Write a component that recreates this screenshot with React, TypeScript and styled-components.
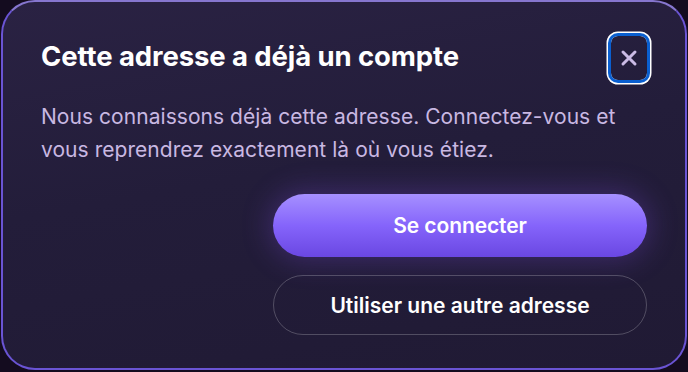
import React from "react";
import styled, { createGlobalStyle } from "styled-components";

const Global = createGlobalStyle`
  html, body { margin: 0; padding: 0; background: #140c1f; }
  body { font-family: Inter, "Noto Sans", sans-serif; -webkit-font-smoothing: antialiased; }
`;

const Page = styled.div`
  width: 688px;
  height: 372px;
  padding: 0 1px 2px 1px;
  box-sizing: border-box;
`;

const Dialog = styled.section`
  box-sizing: border-box;
  width: 686px;
  height: 370px;
  border: 2px solid #6a54d4;
  border-top-color: #8676cf;
  border-radius: 34px;
  background: linear-gradient(170deg, #2a2243 0%, #231d3a 45%, #201a34 100%);
  padding: 30px 38px 0 38px;
  display: flex;
  flex-direction: column;
`;

const Header = styled.div`
  display: flex;
  align-items: center;
  justify-content: space-between;
`;

const Title = styled.h2`
  margin: 0;
  font-family: Inter, sans-serif;
  font-weight: 700;
  font-size: 27.5px;
  line-height: 34px;
  color: #ffffff;
  letter-spacing: -0.1px;
`;

const CloseButton = styled.button`
  width: 36px;
  height: 44px;
  margin-right: 0px;
  margin-top: 4px;
  padding: 0;
  border: none;
  border-radius: 7px;
  background: transparent;
  display: flex;
  align-items: center;
  justify-content: center;
  box-shadow: 0 0 0 3px #0a5fd0, 0 0 0 4.5px #ffffff;
  color: #cbbbe6;
`;

const Body = styled.p`
  margin: 20px 0 0 0;
  font-family: Inter, sans-serif;
  font-size: 21px;
  line-height: 33px;
  letter-spacing: 0.05px;
  color: #c9b8e2;
  max-width: 590px;
`;

const Actions = styled.div`
  margin-top: 28px;
  align-self: flex-end;
  width: 374px;
  display: flex;
  flex-direction: column;
  gap: 18px;
`;

const Button = styled.button<{ $primary?: boolean }>`
  box-sizing: border-box;
  width: 100%;
  height: ${(p) => (p.$primary ? "63px" : "60px")};
  border-radius: 999px;
  font-family: Inter, sans-serif;
  font-weight: 600;
  font-size: 21px;
  letter-spacing: ${(p) => (p.$primary ? "-0.1px" : "0px")};
  color: #ffffff;
  cursor: pointer;
  border: ${(p) => (p.$primary ? "none" : "1.5px solid rgba(255,255,255,0.22)")};
  background: ${(p) =>
    p.$primary
      ? "linear-gradient(180deg, #a690ff 0%, #8564fb 50%, #6a47e2 100%)"
      : "transparent"};
  box-shadow: ${(p) =>
    p.$primary ? "0 0 28px 4px rgba(130, 80, 230, 0.28)" : "none"};
`;

export default function App() {
  return (
    <Page>
      <Global />
      <Dialog>
        <Header>
          <Title>Cette adresse a déjà un compte</Title>
          <CloseButton aria-label="Fermer">
            <svg width="18" height="18" viewBox="0 0 18 18">
              <path d="M3 3 L15 15 M15 3 L3 15" stroke="#cbbbe6" strokeWidth="3" strokeLinecap="round" />
            </svg>
          </CloseButton>
        </Header>
        <Body>
          Nous connaissons déjà cette adresse. Connectez-vous et vous reprendrez exactement là où vous étiez.
        </Body>
        <Actions>
          <Button $primary>Se connecter</Button>
          <Button>Utiliser une autre adresse</Button>
        </Actions>
      </Dialog>
    </Page>
  );
}
